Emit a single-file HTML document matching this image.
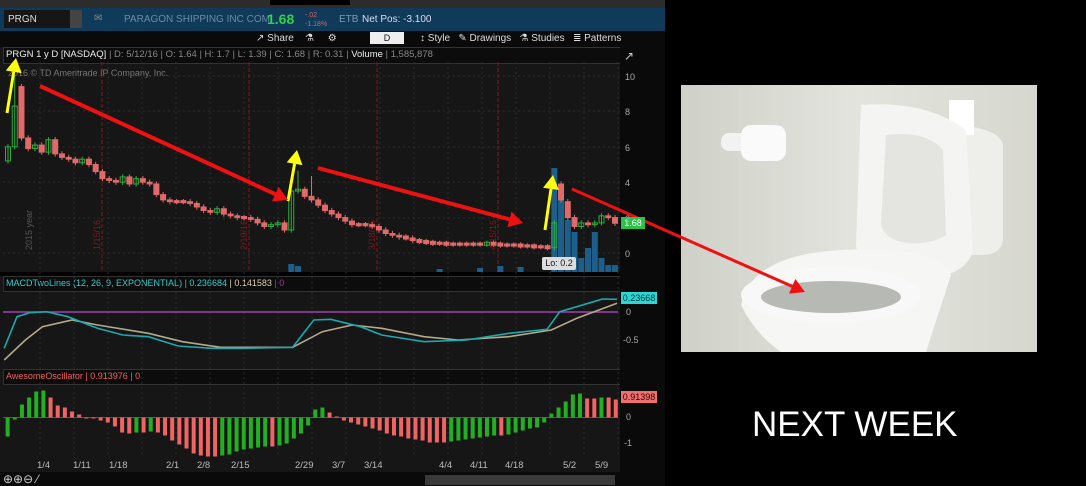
<!DOCTYPE html>
<html><head><meta charset="utf-8"><style>
body{margin:0;width:1086px;height:486px;background:#000;overflow:hidden;font-family:"Liberation Sans",sans-serif;position:relative}
.a{position:absolute}
.t{font-size:10px;color:#ccc;white-space:nowrap}
</style></head><body>
<div class="a" style="left:0;top:0;width:665px;height:486px;background:#161616"></div>
<div class="a" style="left:0;top:0;width:665px;height:8px;background:#2c2c2c"></div>
<div class="a" style="left:270px;top:0;width:80px;height:5px;background:#000"></div>
<div class="a" style="left:0;top:8px;width:665px;height:23px;background:#0f3a5a"></div>
<div class="a" style="left:4px;top:10px;width:66px;height:18px;background:#161616"></div>
<div class="a" style="left:70px;top:10px;width:12px;height:18px;background:#444"></div>
<div class="a t" style="left:8px;top:14px;color:#ddd">PRGN</div>
<div class="a t" style="left:94px;top:13px;color:#888">&#x2709;</div>
<div class="a t" style="left:124px;top:14px;color:#6f8aa6">PARAGON SHIPPING INC COM</div>
<div class="a" style="left:267px;top:11px;font-size:14px;font-weight:bold;color:#2fd04a">1.68</div>
<div class="a" style="left:305px;top:11px;font-size:7px;color:#e06060;line-height:9px">-.02<br>-1.18%</div>
<div class="a t" style="left:339px;top:14px;color:#7f9ab6">ETB</div>
<div class="a t" style="left:362px;top:14px;color:#dde">Net Pos: -3.100</div>
<div class="a" style="left:0;top:31px;width:665px;height:16px;background:#0a0a0a"></div>
<div class="a t" style="left:256px;top:33px;color:#ddd">&#x2197; Share &nbsp;&nbsp; &#x2697; &nbsp;&nbsp;&nbsp; &#x2699;</div>
<div class="a" style="left:370px;top:32px;width:34px;height:12px;background:#eee;color:#111;font-size:9px;text-align:center;line-height:12px">D</div>
<div class="a t" style="left:420px;top:33px;color:#ddd">&#x2195; Style &nbsp; &#x270E; Drawings &nbsp; &#x2697; Studies &nbsp; &#x2263; Patterns</div>
<div class="a" style="left:3px;top:47px;width:617px;height:15px;background:#0c0c0c;border:1px solid #333"></div>
<div class="a t" style="left:6px;top:49px;font-size:9.5px"><span style="color:#eee">PRGN 1 y D [NASDAQ]</span> <span style="color:#888">| D: 5/12/16 | O: 1.64 | H: 1.7 | L: 1.39 | C: 1.68 | R: 0.31 |</span> <span style="color:#eee">Volume</span> <span style="color:#888">| 1,585,878</span></div>
<div class="a t" style="left:8px;top:68px;font-size:9px;color:#777">2016 © TD Ameritrade IP Company, Inc.</div>
<div class="a" style="left:0;top:272px;width:620px;height:4px;background:#000"></div>
<div class="a" style="left:3px;top:276px;width:617px;height:14px;background:#0c0c0c;border:1px solid #333"></div>
<div class="a t" style="left:6px;top:278px;font-size:9px"><span style="color:#3cc">MACDTwoLines (12, 26, 9, EXPONENTIAL)</span> <span style="color:#3cc">| 0.236684</span> <span style="color:#dca">| 0.141583</span> <span style="color:#a3a">| 0</span></div>
<div class="a" style="left:3px;top:369px;width:617px;height:14px;background:#0c0c0c;border:1px solid #333"></div>
<div class="a t" style="left:6px;top:371px;font-size:9px;color:#f06060">AwesomeOscillator | 0.913976 | 0</div>
<div class="a" style="left:620px;top:47px;width:45px;height:439px;background:#0a0a0a"></div>
<div class="a" style="left:0;top:472px;width:665px;height:14px;background:#0a0a0a"></div>
<div class="a" style="left:425px;top:475px;width:190px;height:10px;background:#3a3a3a"></div>
<div class="a t" style="left:3px;top:472px;font-size:12px;color:#ccc">⊕⊕⊖ ⁄</div>
<svg class="a" style="left:0;top:0" width="1086" height="486" id="s"></svg>
<div class="a" style="left:681px;top:85px;width:356px;height:267px;background:linear-gradient(90deg,#cfd1c9,#e3e4dd 50%,#d6d7cf)"></div>
<svg class="a" style="left:681px;top:85px" width="356" height="267">
<rect x="40" y="48" width="40" height="18" rx="8" fill="#f2f2f2"/>
<rect x="60" y="40" width="45" height="36" rx="10" fill="#fafafa"/>
<path d="M280 40 Q320 45 322 60 L322 155 Q320 170 300 170 L290 170 Z" fill="#eeeeea"/>
<rect x="268" y="15" width="25" height="35" fill="#fff"/>
<path d="M180 20 Q245 15 285 45 L292 165 Q285 195 225 195 Q180 195 175 160 Z" fill="#f4f4f2"/>
<path d="M205 50 Q245 45 262 65 L265 150 Q250 160 225 158 Q205 155 200 140 Z" fill="#e4e4e0"/>
<path d="M60 220 Q70 170 160 165 Q260 160 270 190 L245 267 L100 267 Q75 250 60 220 Z" fill="#f6f6f4"/>
<ellipse cx="150" cy="210" rx="90" ry="28" fill="#f8f8f8"/>
<ellipse cx="150" cy="212" rx="70" ry="16" fill="#b7b9b5"/>
</svg>
<svg class="a" style="left:0;top:0" width="1086" height="486" id="ov"></svg>
<div class="a" style="left:752px;top:405px;font-size:35px;color:#fff">NEXT WEEK</div>
<div class="a" style="left:621px;top:217px;width:24px;height:12px;background:#2cc24a;color:#fff;font-size:9px;text-align:center;line-height:12px">1.68</div>
<div class="a" style="left:621px;top:292px;width:36px;height:12px;background:#2cd6d6;color:#033;font-size:9px;text-align:center;line-height:12px">0.23668</div>
<div class="a" style="left:621px;top:391px;width:36px;height:12px;background:#f07070;color:#300;font-size:9px;text-align:center;line-height:12px">0.91398</div>
<div class="a" style="left:542px;top:257px;width:34px;height:13px;background:#ddd;border-radius:2px;color:#111;font-size:9px;text-align:center;line-height:13px">Lo: 0.2</div>
<div class="a t" style="left:625px;top:60px;font-size:9px;color:#aaa;line-height:35.4px">10<br>8<br>6<br>4<br>2<br>0</div>
<div class="a t" style="left:626px;top:307px;font-size:9px;color:#aaa">0</div>
<div class="a t" style="left:623px;top:335px;font-size:9px;color:#aaa">-0.5</div>
<div class="a t" style="left:626px;top:412px;font-size:9px;color:#aaa">0</div>
<div class="a t" style="left:624px;top:438px;font-size:9px;color:#aaa">-1</div>
<div class="a t" style="left:624px;top:49px;font-size:12px;color:#ccc">&#x2197;</div>
<div class="a t" style="top:460px;left:0;width:620px;height:12px;font-size:9.5px;color:#bbb">
<span class="a" style="left:37px">1/4</span><span class="a" style="left:73px">1/11</span><span class="a" style="left:109px">1/18</span><span class="a" style="left:166px">2/1</span><span class="a" style="left:197px">2/8</span><span class="a" style="left:231px">2/15</span><span class="a" style="left:295px">2/29</span><span class="a" style="left:332px">3/7</span><span class="a" style="left:364px">3/14</span><span class="a" style="left:439px">4/4</span><span class="a" style="left:470px">4/11</span><span class="a" style="left:505px">4/18</span><span class="a" style="left:563px">5/2</span><span class="a" style="left:595px">5/9</span></div>
<script>
var s=document.getElementById('s'),o=document.getElementById('ov'),h='';
function Y(p){return 253-17.7*p}
for(var x=40;x<620;x+=34){h+='<line x1="'+x+'" y1="62" x2="'+x+'" y2="457" stroke="#2c2c2c" stroke-dasharray="2,3"/>';}
[76,111,147,182,218,253].forEach(function(y){h+='<line x1="3" y1="'+y+'" x2="620" y2="'+y+'" stroke="#2c2c2c" stroke-dasharray="2,3"/>'});
[102,249,377,498].forEach(function(x){h+='<line x1="'+x+'" y1="62" x2="'+x+'" y2="272" stroke="#7a1c1c" stroke-dasharray="4,2"/>'});
var vl=[[102,'1/15/16'],[249,'2/19/16'],[377,'3/18/16'],[498,'4/15/16'],[34,'2015 year']];
vl.forEach(function(v){h+='<text x="0" y="0" transform="translate('+(v[0]-2)+',250) rotate(-90)" font-size="9" fill="'+(v[1][0]=='2'&&v[1].length>7?'#555':'#7a1c1c')+'" font-family="Liberation Sans">'+v[1]+'</text>'});
var c=[6.0,8.3,6.5,5.9,6.1,5.7,6.4,5.6,5.4,5.3,5.1,5.3,5.0,4.6,4.2,4.1,4.0,4.3,3.9,4.2,4.0,3.9,3.3,3.0,2.9,2.9,2.9,2.8,2.6,2.4,2.3,2.5,2.2,2.1,2.0,2.0,1.9,1.7,1.5,1.6,1.7,1.3,3.5,3.6,3.2,3.0,2.7,2.4,2.2,2.0,1.8,1.6,1.6,1.6,1.5,1.3,1.1,1.0,0.9,0.85,0.7,0.65,0.6,0.55,0.55,0.5,0.5,0.5,0.5,0.5,0.5,0.55,0.5,0.45,0.45,0.45,0.4,0.4,0.35,0.35,0.3,1.7,3.0,2.0,1.5,1.7,1.6,1.7,2.1,2.0,1.68];
var n=c.length,dx=607/(n-1);
var vol={42:8,43:6,81:104,82:87,83:52,84:40,85:14,86:24,87:40,88:14,89:7,90:7,70:4,73:6,76:5,64:3};
for(var k in vol){var x=8+k*dx;h+='<rect x="'+(x-3)+'" y="'+(272-vol[k])+'" width="6" height="'+vol[k]+'" fill="#1d5f8a"/>';}
for(var i=0;i<n;i++){var x=8+i*dx,op=i?c[i-1]:5.2;if(i==1)op=6.0;if(i==2)op=9.4;if(i==42)op=1.3;if(i==81)op=0.3;if(i==82)op=3.9;if(i==83)op=2.9;
var up=c[i]>op,col=up?'#2cae3c':'#e06a6a',t=Math.max(c[i],op),b=Math.min(c[i],op),hi=t+0.15+(i==1?1.6:0)+(i==43?0.9:0)+(i==45?1:0),lo=b-0.15;
if(Math.abs(t-b)<0.08){t+=0.06;b-=0.06}
h+='<line x1="'+x+'" y1="'+Y(hi)+'" x2="'+x+'" y2="'+Y(lo)+'" stroke="'+col+'"/>';
h+='<rect x="'+(x-2.5)+'" y="'+Y(t)+'" width="5" height="'+(Y(b)-Y(t))+'" fill="'+(up?'none':col)+'" stroke="'+col+'" stroke-width="1"/>';}
h+='<line x1="3" y1="312" x2="618" y2="312" stroke="#a040b0" stroke-width="1.5"/>';
function pl(a,col){var p=a.map(function(q){return (q[0]/2.358).toFixed(1)+','+(q[1]/3+270).toFixed(1)}).join(' ');return '<polyline points="'+p+'" fill="none" stroke="'+col+'" stroke-width="1.6"/>'}
h+=pl([[10,270],[60,210],[100,170],[170,150],[230,165],[350,190],[430,215],[520,232],[690,232],[760,185],[830,165],[900,175],[1000,200],[1080,210],[1200,200],[1300,180],[1360,145],[1455,100]],'#b5a98a');
h+=pl([[10,235],[40,140],[70,128],[110,125],[160,140],[230,175],[290,195],[350,200],[420,228],[500,235],[570,235],[690,232],[740,150],[780,148],[850,170],[900,195],[1000,215],[1100,210],[1200,190],[1290,178],[1320,125],[1400,95],[1420,87],[1455,88]],'#1aa9b0');
var ao=[-19,-2,13,20,26,27,20,12,10,6,3,0,-1,-3,-5,-9,-15,-16,-15,-15,-14,-15,-18,-23,-27,-31,-36,-38,-39,-39,-38,-37,-34,-32,-31,-30,-29,-29,-28,-26,-21,-16,-8,8,10,5,1,-3,-5,-7,-9,-11,-13,-16,-18,-19,-21,-22,-23,-25,-25,-25,-24,-23,-22,-21,-20,-19,-18,-18,-17,-15,-13,-11,-10,-5,4,10,16,23,24,19,19,20,20,18];
var m=ao.length,ax=(1452-18)/2.358/(m-1);
h+='<line x1="3" y1="417.5" x2="618" y2="417.5" stroke="#555"/>';
for(var i=0;i<m;i++){var x=18/2.358+i*ax,v=ao[i],pv=i?ao[i-1]:-30,g=v>pv;if(i==0)g=true;
h+='<rect x="'+(x-2)+'" y="'+(v>0?417.5-v:417.5)+'" width="4" height="'+Math.max(1,Math.abs(v))+'" fill="'+(g?'#22b022':'#f06464')+'"/>';}
s.innerHTML=h;
var a='';
function arr(x1,y1,x2,y2,col,w){var ang=Math.atan2(y2-y1,x2-x1),L=14,W=8;var bx=x2-L*Math.cos(ang),by=y2-L*Math.sin(ang);
a+='<line x1="'+x1+'" y1="'+y1+'" x2="'+bx+'" y2="'+by+'" stroke="'+col+'" stroke-width="'+w+'"/>';
a+='<polygon points="'+x2+','+y2+' '+(bx+W*Math.sin(ang))+','+(by-W*Math.cos(ang))+' '+(bx-W*Math.sin(ang))+','+(by+W*Math.cos(ang))+'" fill="'+col+'"/>';}
arr(7,113,16,58,'#ffff10',3);arr(288,201,297,150,'#ffff10',3);arr(545,230,553,175,'#ffff10',3);
arr(40,86,288,200,'#ee1111',4);arr(318,168,523,223,'#ee1111',4);arr(572,189,805,292,'#ee1111',3);
o.innerHTML=a;
</script>
</body></html>
